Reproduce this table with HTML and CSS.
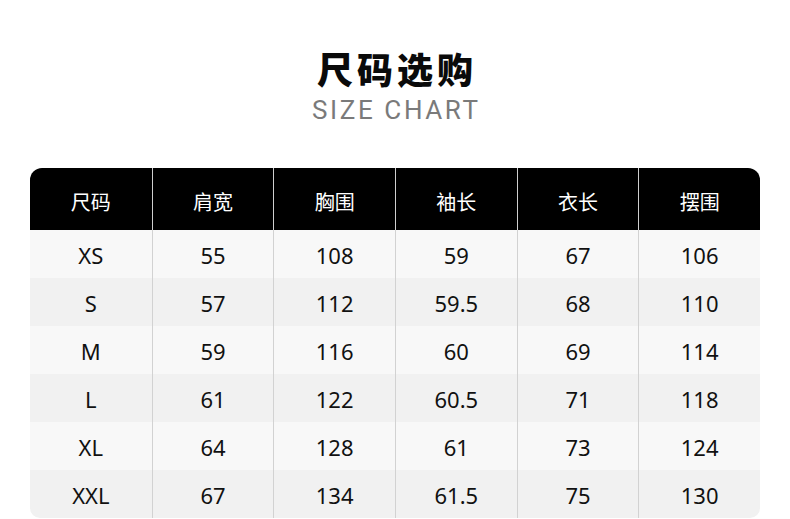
FILE: index.html
```html
<!DOCTYPE html>
<html>
<head>
<meta charset="utf-8">
<link rel="stylesheet" href="styles.css">
</head>
<body>
<div class="page">
  <div class="heading">
    <div class="title">尺码选购</div>
    <div class="subtitle">SIZE CHART</div>
  </div>
  <div class="chart">
    <div class="row head">
      <div class="cell">尺码</div><div class="cell">肩宽</div><div class="cell">胸围</div><div class="cell">袖长</div><div class="cell">衣长</div><div class="cell">摆围</div>
    </div>
    <div class="row odd"><div class="cell">XS</div><div class="cell">55</div><div class="cell">108</div><div class="cell">59</div><div class="cell">67</div><div class="cell">106</div></div>
    <div class="row even"><div class="cell">S</div><div class="cell">57</div><div class="cell">112</div><div class="cell">59.5</div><div class="cell">68</div><div class="cell">110</div></div>
    <div class="row odd"><div class="cell">M</div><div class="cell">59</div><div class="cell">116</div><div class="cell">60</div><div class="cell">69</div><div class="cell">114</div></div>
    <div class="row even"><div class="cell">L</div><div class="cell">61</div><div class="cell">122</div><div class="cell">60.5</div><div class="cell">71</div><div class="cell">118</div></div>
    <div class="row odd"><div class="cell">XL</div><div class="cell">64</div><div class="cell">128</div><div class="cell">61</div><div class="cell">73</div><div class="cell">124</div></div>
    <div class="row even"><div class="cell">XXL</div><div class="cell">67</div><div class="cell">134</div><div class="cell">61.5</div><div class="cell">75</div><div class="cell">130</div></div>
  </div>
</div>
</body>
</html>
```
FILE: styles.css
```css
* { box-sizing: border-box; }
html, body { margin: 0; padding: 0; background: #ffffff; }
body { width: 790px; height: 519px; overflow: hidden; font-family: "Noto Sans", "Noto Sans CJK SC", sans-serif; }
.page { padding: 45px 30px 0 30px; }
.heading { display: flex; flex-direction: column; align-items: center; height: 123px; }
.title {
  font-family: "Noto Sans CJK SC", sans-serif;
  font-weight: 900;
  font-size: 36px;
  line-height: 46px;
  letter-spacing: 4px;
  margin-right: -4px;
  color: #0a0a0a;
}
.subtitle {
  font-family: "Roboto", "Noto Sans", sans-serif;
  font-size: 26px;
  line-height: 34px;
  margin-top: 2px;
  letter-spacing: 2.6px;
  margin-right: -2.6px;
  color: #7a7a7a;
}
.chart {
  width: 730px;
  border-radius: 12px 12px 10px 10px;
  overflow: hidden;
}
.row { display: grid; grid-template-columns: repeat(6, 1fr); height: 48px; }
.row.head { height: 62px; background: #000; color: #fff; font-family: "Noto Sans CJK SC", sans-serif; font-size: 20px; }
.row.odd { background: #f8f8f8; }
.row.even { background: #f1f1f1; }
.cell {
  display: flex; align-items: center; justify-content: center;
  font-size: 22px; color: #111;
  padding-top: 2px;
  border-left: 1px solid #d2d2d2;
}
.cell:first-child { border-left: none; }
.head .cell { color: #fff; font-size: 20px; border-left: 1px solid #cfcfcf; padding-top: 4px; }
.head .cell:first-child { border-left: none; }
```
